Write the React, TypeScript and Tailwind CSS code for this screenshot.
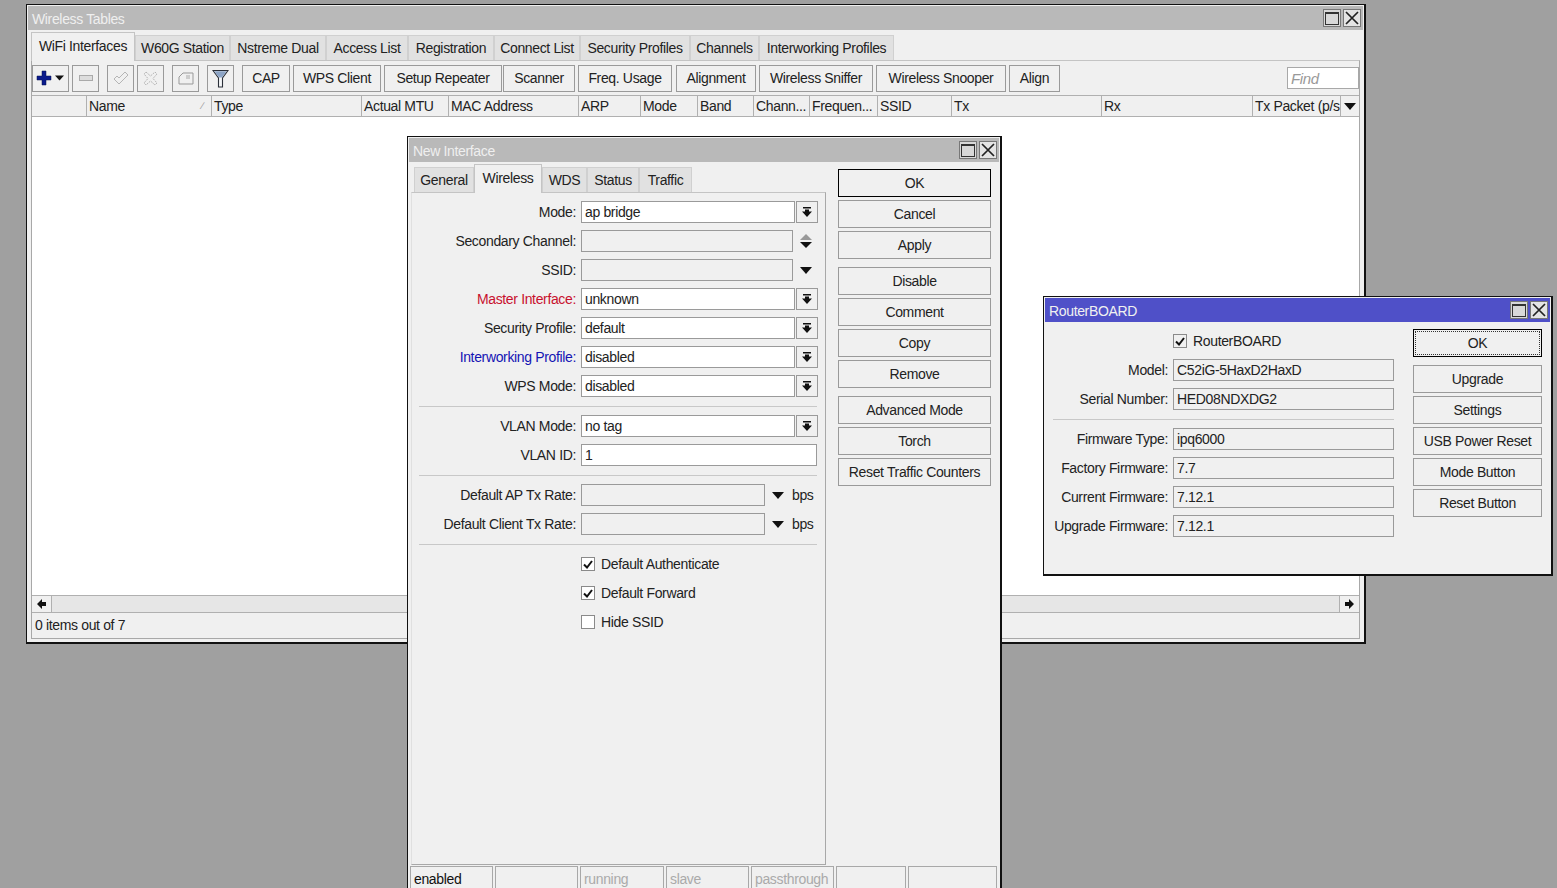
import type { ReactNode } from 'react';

const edge = 'border border-[#9a9a9a]';

function DownArrow({ className = '' }: { className?: string }) {
  return (
    <svg width="12" height="7" viewBox="0 0 12 7" className={className}>
      <path d="M0 0h12L6 7z" fill="#111" />
    </svg>
  );
}

function TitleButtons() {
  return (
    <div className="flex gap-[2px]">
      <div className="flex h-[18px] w-[18px] items-center justify-center border border-[#777] bg-[#d8d8d8]">
        <div className="h-[13px] w-[14px] border border-[#333] border-t-2 bg-transparent" />
      </div>
      <div className="flex h-[18px] w-[18px] items-center justify-center border border-[#777] bg-[#e4e4e4]">
        <svg width="14" height="14" viewBox="0 0 14 14">
          <path d="M1 1l12 12M13 1L1 13" stroke="#222" strokeWidth="1.7" fill="none" />
        </svg>
      </div>
    </div>
  );
}

function Window({ title, titleBg, titleText, className, children }: { title: string; titleBg: string; titleText: string; className: string; children: ReactNode }) {
  return (
    <div className={`absolute flex flex-col border border-[#111] border-r-2 border-b-2 bg-[#f0f0f0] ${className}`}>
      <div className={`mx-px mt-px flex h-[24px] shrink-0 items-center justify-between pl-[4px] pr-[2px] ${titleBg}`}>
        <span className={`mt-[2px] ${titleText}`}>{title}</span>
        <TitleButtons />
      </div>
      {children}
    </div>
  );
}

function Tab({ label, active, w }: { label: string; active?: boolean; w: string }) {
  return active ? (
    <div className={`relative z-10 -mb-px flex h-[29px] items-start justify-center border-x border-t border-[#c4c4c4] bg-[#f0f0f0] pt-[6px] ${w}`}>{label}</div>
  ) : (
    <div className={`flex h-[25px] items-center justify-center border-x border-t border-[#d0d0d0] bg-[#e1e1e1] ${w}`}>{label}</div>
  );
}

function ToolButton({ children, w }: { children: ReactNode; w: string }) {
  return <div className={`flex h-[27px] shrink-0 items-center justify-center ${edge} ${w}`}>{children}</div>;
}

function ActionButton({ label, kind }: { label: string; kind?: 'default' | 'focus' }) {
  if (kind === 'focus') {
    return (
      <div className="h-[28px] shrink-0 border border-black p-px">
        <div className="flex h-full items-center justify-center border border-dotted border-[#333]">{label}</div>
      </div>
    );
  }
  return <div className={`flex h-[28px] shrink-0 items-center justify-center ${kind ? 'border border-black' : edge}`}>{label}</div>;
}

function DropButton() {
  return (
    <div className={`ml-px flex h-[22px] w-[22px] items-center justify-center ${edge}`}>
      <svg width="10" height="10" viewBox="0 0 10 10">
        <path d="M1 0h8v1.500H1zM3 2.500h4V4.500h3L5 10 0 4.500h3z" fill="#111" />
      </svg>
    </div>
  );
}

function Row({ label, labelColor = 'text-[#222]', value, fieldW, disabled, after }: { label: string; labelColor?: string; value?: string; fieldW: string; disabled?: boolean; after?: ReactNode }) {
  return (
    <div className="flex h-[22px] items-center">
      <div className={`w-[164px] shrink-0 text-right ${labelColor}`}>{label}</div>
      <div className={`ml-[5px] flex h-[22px] items-center pl-[3px] ${fieldW} ${edge} ${disabled ? 'bg-[#f0f0f0]' : 'bg-white'}`}>{value}</div>
      {after}
    </div>
  );
}

function Check({ label, checked, gray }: { label: string; checked?: boolean; gray?: boolean }) {
  return (
    <div className="flex h-[22px] items-center">
      <div className={`flex h-[14px] w-[14px] items-center justify-center border border-[#8a8a8a] ${gray ? 'bg-[#f0f0f0]' : 'bg-white'}`}>
        {checked && (
          <svg width="10" height="9" viewBox="0 0 10 9">
            <path d="M1 4.500l3 3L9 1" stroke="#111" strokeWidth="2" fill="none" />
          </svg>
        )}
      </div>
      <span className="ml-[6px]">{label}</span>
    </div>
  );
}

function Sep({ className }: { className: string }) {
  return <div className={`h-px shrink-0 bg-[#c8c8c8] ${className}`} />;
}

const columns: [string, string][] = [
  ['', 'w-[55px]'],
  ['Name', 'w-[125px]'],
  ['Type', 'w-[150px]'],
  ['Actual MTU', 'w-[87px]'],
  ['MAC Address', 'w-[130px]'],
  ['ARP', 'w-[62px]'],
  ['Mode', 'w-[57px]'],
  ['Band', 'w-[56px]'],
  ['Chann...', 'w-[56px]'],
  ['Frequen...', 'w-[68px]'],
  ['SSID', 'w-[74px]'],
  ['Tx', 'w-[150px]'],
  ['Rx', 'w-[151px]'],
  ['Tx Packet (p/s', 'w-[88px]'],
];

const toolLabels: [string, string][] = [
  ['CAP', 'w-[48px] ml-[8px]'],
  ['WPS Client', 'w-[88px] ml-[3px]'],
  ['Setup Repeater', 'w-[118px] ml-[3px]'],
  ['Scanner', 'w-[72px] ml-px'],
  ['Freq. Usage', 'w-[94px] ml-[3px]'],
  ['Alignment', 'w-[80px] ml-[4px]'],
  ['Wireless Sniffer', 'w-[114px] ml-[3px]'],
  ['Wireless Snooper', 'w-[130px] ml-[3px]'],
  ['Align', 'w-[51px] ml-[3px]'],
];

function WirelessTables() {
  return (
    <Window title="Wireless Tables" titleBg="bg-[#b9b9b9]" titleText="text-[#efefef]" className="left-[26px] top-[4px] h-[640px] w-[1340px]">
      <div className="flex h-[30px] shrink-0 items-end pl-[4px]">
        <Tab label="WiFi Interfaces" active w="w-[104px]" />
        <Tab label="W60G Station" w="w-[95px]" />
        <Tab label="Nstreme Dual" w="w-[96px]" />
        <Tab label="Access List" w="w-[82px]" />
        <Tab label="Registration" w="w-[86px]" />
        <Tab label="Connect List" w="w-[86px]" />
        <Tab label="Security Profiles" w="w-[110px]" />
        <Tab label="Channels" w="w-[69px]" />
        <Tab label="Interworking Profiles" w="w-[135px]" />
      </div>
      <div className="mx-[4px] mb-[3px] flex min-h-0 flex-1 flex-col border border-[#a8a8a8] border-t-[#c4c4c4]">
        <div className="flex h-[34px] shrink-0 items-center">
          <ToolButton w="w-[37px]">
            <svg width="30" height="16" viewBox="0 0 30 16">
              <path d="M6 1h4v5h5v4h-5v5H6v-5H1V6h5z" fill="#0a1a8c" stroke="#05104f" strokeWidth="0.5" />
              <path d="M19 5.500h9l-4.500 5z" fill="#111" />
            </svg>
          </ToolButton>
          <ToolButton w="w-[27px] ml-[3px]">
            <svg width="14" height="6" viewBox="0 0 14 6">
              <rect x="0.500" y="0.500" width="13" height="5" fill="#ddd" stroke="#aaa" />
            </svg>
          </ToolButton>
          <ToolButton w="w-[27px] ml-[8px]">
            <svg width="16" height="14" viewBox="0 0 16 14">
              <path d="M1 8l3-3 2 2 6-6 3 3-9 9z" fill="none" stroke="#b5b5b5" />
            </svg>
          </ToolButton>
          <ToolButton w="w-[27px] ml-[3px]">
            <svg width="15" height="15" viewBox="0 0 15 15">
              <path d="M3 1l4.500 4L12 1l2 2-4 4.500 4 4.500-2 2-4.500-4L3 14l-2-2 4-4.500L1 3z" fill="none" stroke="#b5b5b5" strokeDasharray="2 1" />
            </svg>
          </ToolButton>
          <ToolButton w="w-[27px] ml-[8px]">
            <svg width="16" height="13" viewBox="0 0 16 13">
              <path d="M1 12V5l4-4h10v11z" fill="none" stroke="#999" />
              <path d="M8 4h4M8 6h4" stroke="#aaa" />
            </svg>
          </ToolButton>
          <ToolButton w="w-[27px] ml-[8px]">
            <svg width="17" height="19" viewBox="0 0 17 19">
              <path d="M1 1.500h15L10.500 9v9h-4V9z" fill="#f4f6f8" stroke="#2a2f38" strokeWidth="1.100" />
              <path d="M2.300 2.200h12.400L10 8.500H7z" fill="#8ca4c6" />
            </svg>
          </ToolButton>
          {toolLabels.map(([label, w]) => (
            <ToolButton key={label} w={w}>{label}</ToolButton>
          ))}
          <div className="ml-auto flex h-[22px] w-[72px] items-center border border-[#a8a8a8] bg-white pl-[3px] text-[15px] italic text-[#999]">Find</div>
        </div>
        <div className="flex h-[22px] shrink-0 border-y border-[#b0b0b0]">
          {columns.map(([name, w]) => (
            <div key={name || 'blank'} className={`relative flex shrink-0 items-center overflow-hidden whitespace-nowrap border-r border-[#b0b0b0] pl-[2px] ${w}`}>
              {name}
              {name === 'Name' && <span className="absolute right-[8px] text-[10px] text-[#999]">∕</span>}
            </div>
          ))}
          <div className="flex flex-1 items-center justify-center">
            <DownArrow />
          </div>
        </div>
        <div className="min-h-0 flex-1 bg-white" />
        <div className="flex h-[18px] shrink-0 items-center border-y border-[#b0b0b0]">
          <div className="flex h-full w-[20px] items-center justify-center border-r border-[#b0b0b0]">
            <svg width="9" height="10" viewBox="0 0 9 10"><path d="M0 5l5-5v3h4v4H5v3z" fill="#111" /></svg>
          </div>
          <div className="h-full flex-1 bg-[#e6e6e6]" />
          <div className="flex h-full w-[20px] items-center justify-center border-l border-[#b0b0b0]">
            <svg width="9" height="10" viewBox="0 0 9 10"><path d="M9 5L4 0v3H0v4h4v3z" fill="#111" /></svg>
          </div>
        </div>
        <div className="flex h-[25px] shrink-0 items-center pb-[2px] pl-[3px]">0 items out of 7</div>
      </div>
    </Window>
  );
}

function NewInterface() {
  return (
    <Window title="New Interface" titleBg="bg-[#b9b9b9]" titleText="text-[#efefef]" className="left-[407px] top-[136px] h-[780px] w-[595px]">
      <div className="flex min-h-0 flex-1">
        <div className="ml-[3px] flex w-[415px] shrink-0 flex-col">
          <div className="flex h-[30px] shrink-0 items-end pl-[3px]">
            <Tab label="General" w="w-[60px]" />
            <Tab label="Wireless" active w="w-[68px]" />
            <Tab label="WDS" w="w-[45px]" />
            <Tab label="Status" w="w-[52px]" />
            <Tab label="Traffic" w="w-[53px]" />
          </div>
          <div className="flex h-[673px] shrink-0 flex-col gap-[7px] border border-[#a8a8a8] border-t-[#c4c4c4] border-l-[#e0e0e0] pt-[8px]">
            <Row label="Mode:" value="ap bridge" fieldW="w-[214px]" after={<DropButton />} />
            <Row
              label="Secondary Channel:"
              fieldW="w-[212px]"
              disabled
              after={
                <svg width="12" height="14" viewBox="0 0 12 14" className="ml-[7px]">
                  <path d="M6 0l6 6H0z" fill="#999" />
                  <path d="M0 8h12l-6 6z" fill="#111" />
                </svg>
              }
            />
            <Row label="SSID:" fieldW="w-[212px]" disabled after={<DownArrow className="ml-[7px]" />} />
            <Row label="Master Interface:" labelColor="text-[#c8102e]" value="unknown" fieldW="w-[214px]" after={<DropButton />} />
            <Row label="Security Profile:" value="default" fieldW="w-[214px]" after={<DropButton />} />
            <Row label="Interworking Profile:" labelColor="text-[#1414b4]" value="disabled" fieldW="w-[214px]" after={<DropButton />} />
            <Row label="WPS Mode:" value="disabled" fieldW="w-[214px]" after={<DropButton />} />
            <Sep className="ml-[7px] mr-[8px] mt-[2px] mb-px" />
            <Row label="VLAN Mode:" value="no tag" fieldW="w-[214px]" after={<DropButton />} />
            <Row label="VLAN ID:" value="1" fieldW="w-[236px]" />
            <Sep className="ml-[7px] mr-[8px] mt-[2px] mb-px" />
            <Row
              label="Default AP Tx Rate:"
              fieldW="w-[184px]"
              disabled
              after={
                <>
                  <DownArrow className="ml-[7px]" />
                  <span className="ml-[8px]">bps</span>
                </>
              }
            />
            <Row
              label="Default Client Tx Rate:"
              fieldW="w-[184px]"
              disabled
              after={
                <>
                  <DownArrow className="ml-[7px]" />
                  <span className="ml-[8px]">bps</span>
                </>
              }
            />
            <Sep className="ml-[7px] mr-[8px] mt-[2px] mb-px" />
            <div className="ml-[169px] flex flex-col gap-[7px]">
              <Check label="Default Authenticate" checked />
              <Check label="Default Forward" checked />
              <Check label="Hide SSID" />
            </div>
          </div>
        </div>
        <div className="ml-[12px] mt-[7px] flex w-[153px] shrink-0 flex-col gap-[3px]">
          <ActionButton label="OK" kind="default" />
          <ActionButton label="Cancel" />
          <ActionButton label="Apply" />
          <div className="h-[2px] shrink-0" />
          <ActionButton label="Disable" />
          <ActionButton label="Comment" />
          <ActionButton label="Copy" />
          <ActionButton label="Remove" />
          <div className="h-[2px] shrink-0" />
          <ActionButton label="Advanced Mode" />
          <ActionButton label="Torch" />
          <ActionButton label="Reset Traffic Counters" />
        </div>
      </div>
      <div className="absolute left-[2px] top-[729px] flex h-[24px] gap-[2px]">
        {[
          ['enabled', 'w-[83px] text-[#111]'],
          ['', 'w-[83px]'],
          ['running', 'w-[84px] text-[#aaa]'],
          ['slave', 'w-[83px] text-[#aaa]'],
          ['passthrough', 'w-[83px] text-[#aaa]'],
          ['', 'w-[70px]'],
          ['', 'w-[89px]'],
        ].map(([text, w], i) => (
          <div key={i} className={`flex h-full items-center border-x border-t border-[#a8a8a8] pl-[3px] ${w}`}>{text}</div>
        ))}
      </div>
    </Window>
  );
}

function RouterBoard() {
  return (
    <Window title="RouterBOARD" titleBg="bg-[#4f50c8]" titleText="text-[#f0f0f0]" className="left-[1043px] top-[296px] h-[280px] w-[510px]">
      <div className="flex flex-1">
        <div className="ml-[9px] flex w-[350px] shrink-0 flex-col gap-[7px] pt-[8px]">
          <div className="ml-[120px]">
            <Check label="RouterBOARD" checked gray />
          </div>
          <BoardRow label="Model:" value="C52iG-5HaxD2HaxD" />
          <BoardRow label="Serial Number:" value="HED08NDXDG2" />
          <Sep className="mr-[9px] mt-[2px] mb-px" />
          <BoardRow label="Firmware Type:" value="ipq6000" />
          <BoardRow label="Factory Firmware:" value="7.7" />
          <BoardRow label="Current Firmware:" value="7.12.1" />
          <BoardRow label="Upgrade Firmware:" value="7.12.1" />
        </div>
        <div className="ml-[10px] mt-[7px] flex w-[129px] shrink-0 flex-col gap-[3px]">
          <ActionButton label="OK" kind="focus" />
          <div className="h-[2px] shrink-0" />
          <ActionButton label="Upgrade" />
          <ActionButton label="Settings" />
          <ActionButton label="USB Power Reset" />
          <ActionButton label="Mode Button" />
          <ActionButton label="Reset Button" />
        </div>
      </div>
    </Window>
  );
}

function BoardRow({ label, value }: { label: string; value: string }) {
  return (
    <div className="flex h-[22px] items-center">
      <div className="w-[115px] shrink-0 whitespace-nowrap text-right">{label}</div>
      <div className={`ml-[5px] flex h-[22px] w-[221px] items-center pl-[3px] ${edge}`}>{value}</div>
    </div>
  );
}

export default function App() {
  return (
    <div className="relative h-[888px] w-[1557px] overflow-hidden bg-[#a0a0a0] font-['Liberation_Sans',sans-serif] text-[14px] leading-none tracking-[-0.35px] text-[#222]">
      <WirelessTables />
      <NewInterface />
      <RouterBoard />
    </div>
  );
}
